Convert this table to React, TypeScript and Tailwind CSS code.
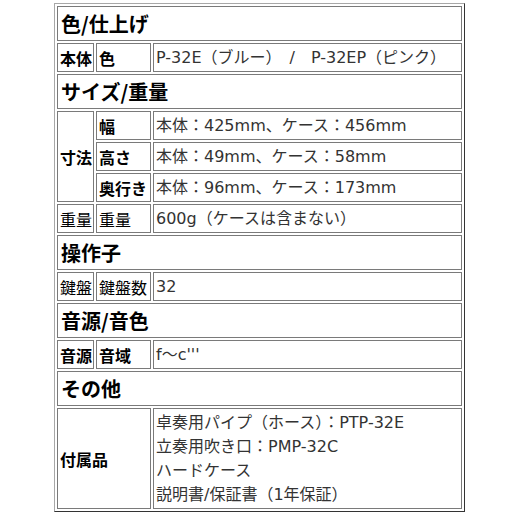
const font = "font-['DejaVu_Sans','Noto_Sans_CJK_JP',sans-serif]";

function Head({ title }: { title: string }) {
  return (
    <tr>
      <td
        colSpan={3}
        className="h-[35px] border border-[#7a7a7a] px-[3px] align-middle font-['Noto_Sans_CJK_JP',sans-serif] text-[20px] font-bold leading-none text-black"
      >
        {title}
      </td>
    </tr>
  );
}

const cell = "h-[29px] border border-[#7a7a7a] px-[2px] align-middle leading-none whitespace-nowrap";
const label = `${cell} font-['Noto_Sans_CJK_JP',sans-serif] text-[16px] font-bold text-black`;
const plainLabel = `${cell} font-['Noto_Sans_CJK_JP',sans-serif] text-[16px] text-black`;
const value = `${cell} text-[16px] text-[#333]`;

export default function App() {
  return (
    <div className={`min-h-[517px] w-[517px] bg-white pt-[3px] ${font}`}>
      <table className="ml-[54px] w-[411px] table-fixed border-separate border-spacing-[2px] border border-t-[#a8a8a8] border-l-[#a8a8a8] border-b-[#333] border-r-[#333]">
        <colgroup>
          <col className="w-[37px]" />
          <col className="w-[55px]" />
          <col />
        </colgroup>
        <tbody>
          <Head title="色/仕上げ" />
          <tr>
            <td className={label}>本体</td>
            <td className={label}>色</td>
            <td className={value}>P-32E（ブルー）　/　P-32EP（ピンク）</td>
          </tr>

          <Head title="サイズ/重量" />
          <tr>
            <td rowSpan={3} className={label}>寸法</td>
            <td className={label}>幅</td>
            <td className={value}>本体：425mm、ケース：456mm</td>
          </tr>
          <tr>
            <td className={label}>高さ</td>
            <td className={value}>本体：49mm、ケース：58mm</td>
          </tr>
          <tr>
            <td className={label}>奥行き</td>
            <td className={value}>本体：96mm、ケース：173mm</td>
          </tr>
          <tr>
            <td className={plainLabel}>重量</td>
            <td className={plainLabel}>重量</td>
            <td className={value}>600g（ケースは含まない）</td>
          </tr>

          <Head title="操作子" />
          <tr>
            <td className={plainLabel}>鍵盤</td>
            <td className={plainLabel}>鍵盤数</td>
            <td className={value}>32</td>
          </tr>

          <Head title="音源/音色" />
          <tr>
            <td className={label}>音源</td>
            <td className={label}>音域</td>
            <td className={value}>f～c'''</td>
          </tr>

          <Head title="その他" />
          <tr>
            <td colSpan={2} className={`${label} h-[101px]`}>付属品</td>
            <td className="border border-[#7a7a7a] px-[2px] py-[1px] align-middle text-[16px] leading-[24px] text-[#333]">
              卓奏用パイプ（ホース）：PTP-32E
              <br />
              立奏用吹き口：PMP-32C
              <br />
              ハードケース
              <br />
              説明書/保証書（1年保証）
            </td>
          </tr>
        </tbody>
      </table>
    </div>
  );
}
